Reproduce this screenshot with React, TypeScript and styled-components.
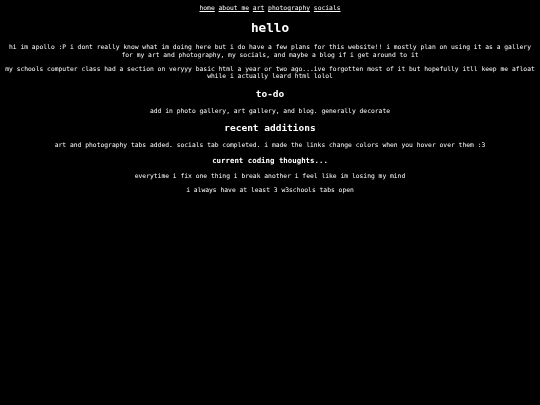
import styled, { createGlobalStyle } from "styled-components";

const GlobalStyle = createGlobalStyle`
  html {
    background-color: black;
  }
  body {
    margin: 4px;
    background-color: black;
    color: white;
    font-family: "DejaVu Sans Mono", "Liberation Mono", monospace;
    font-size: 6.33px;
  }
`;

const navLinks = ["home", "about me", "art", "photography", "socials"];

const App = () => {
  return (
    <>
      <GlobalStyle />
      <Wrapper>
        <Nav>
          {navLinks.map((link, i) => (
            <span key={link}>
              <NavLink href="#">{link}</NavLink>
              {i < navLinks.length - 1 && " "}
            </span>
          ))}
        </Nav>
        <Title>hello</Title>
        <Text>
          hi im apollo :P i dont really know what im doing here but i do have a
          few plans for this website!! i mostly plan on using it as a gallery
          for my art and photography, my socials, and maybe a blog if i get
          around to it
        </Text>
        <Text>
          my schools computer class had a section on veryyy basic html a year or
          two ago...ive forgotten most of it but hopefully itll keep me afloat
          while i actually leard html lolol
        </Text>
        <Heading>to-do</Heading>
        <Text>
          add in photo gallery, art gallery, and blog. generally decorate
        </Text>
        <Heading>recent additions</Heading>
        <Text>
          art and photography tabs added. socials tab completed. i made the
          links change colors when you hover over them :3
        </Text>
        <SubHeading>current coding thoughts...</SubHeading>
        <Text>
          everytime i fix one thing i break another i feel like im losing my
          mind
        </Text>
        <Text>i always have at least 3 w3schools tabs open</Text>
      </Wrapper>
    </>
  );
};

const Wrapper = styled.div`
  text-align: center;
  will-change: transform;
`;

const Nav = styled.div`
  text-align: center;
  line-height: 1.15;
`;

const NavLink = styled.a`
  color: white;
  text-decoration: underline;
  &:hover {
    color: hotpink;
  }
`;

const Title = styled.h1`
  font-size: 2em;
  margin: 0.67em 0;
`;

const Heading = styled.h2`
  font-size: 1.5em;
  margin: 0.83em 0;
`;

const SubHeading = styled.h3`
  font-size: 1.17em;
  margin: 1em 0;
`;

const Text = styled.p`
  margin: 1em 0;
  line-height: 1.2;
`;

export default App;
